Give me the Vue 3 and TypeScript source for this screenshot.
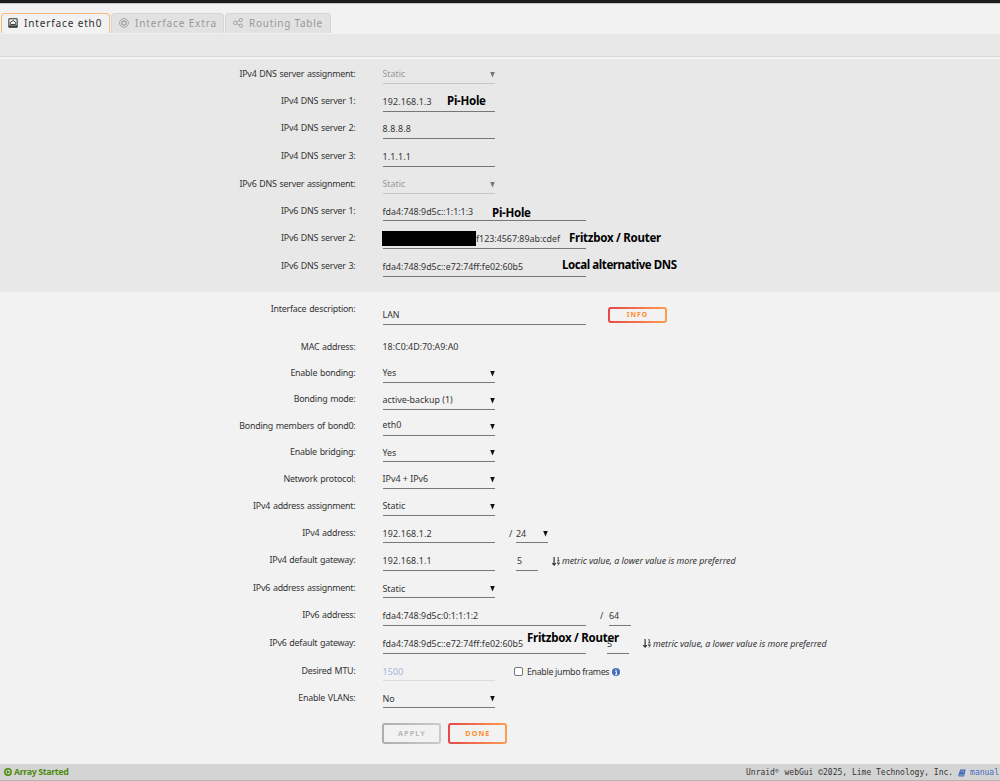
<script setup lang="ts">
interface Row {
  label: string
  value?: string
  kind: 'select' | 'input' | 'text'
  line: number
  labelY: number
  valueY: number
  width?: 'wide'
  disabled?: boolean
  redacted?: boolean
  extra?: 'info' | 'mask4' | 'metric4' | 'mask6' | 'metric6' | 'jumbo'
}

// line / labelY / valueY: baseline rule, label centre and value centre of each row.
const dnsRows: Row[] = [
  { label: 'IPv4 DNS server assignment:', value: 'Static', kind: 'select', line: 84, labelY: 73.5, valueY: 74, disabled: true },
  { label: 'IPv4 DNS server 1:', value: '192.168.1.3', kind: 'input', line: 112, labelY: 100.5, valueY: 101.5 },
  { label: 'IPv4 DNS server 2:', value: '8.8.8.8', kind: 'input', line: 139, labelY: 128, valueY: 129 },
  { label: 'IPv4 DNS server 3:', value: '1.1.1.1', kind: 'input', line: 167, labelY: 156, valueY: 157 },
  { label: 'IPv6 DNS server assignment:', value: 'Static', kind: 'select', line: 194, labelY: 183.5, valueY: 184, disabled: true },
  { label: 'IPv6 DNS server 1:', value: 'fda4:748:9d5c::1:1:1:3', kind: 'input', line: 221, labelY: 210.5, valueY: 211.5, width: 'wide' },
  { label: 'IPv6 DNS server 2:', value: 'f123:4567:89ab:cdef', kind: 'input', line: 249, labelY: 238, valueY: 238.5, width: 'wide', redacted: true },
  { label: 'IPv6 DNS server 3:', value: 'fda4:748:9d5c::e72:74ff:fe02:60b5', kind: 'input', line: 277, labelY: 265.5, valueY: 266.5, width: 'wide' },
]

const mainRows: Row[] = [
  { label: 'Interface description:', value: 'LAN', kind: 'input', line: 325, labelY: 309, valueY: 314.5, width: 'wide', extra: 'info' },
  { label: 'MAC address:', value: '18:C0:4D:70:A9:A0', kind: 'text', line: 356, labelY: 346.5, valueY: 346.5 },
  { label: 'Enable bonding:', value: 'Yes', kind: 'select', line: 383, labelY: 372.5, valueY: 373 },
  { label: 'Bonding mode:', value: 'active-backup (1)', kind: 'select', line: 410, labelY: 399, valueY: 400 },
  { label: 'Bonding members of bond0:', value: 'eth0', kind: 'select', line: 436, labelY: 426, valueY: 425 },
  { label: 'Enable bridging:', value: 'Yes', kind: 'select', line: 462, labelY: 452, valueY: 452.5 },
  { label: 'Network protocol:', value: 'IPv4 + IPv6', kind: 'select', line: 489, labelY: 478.5, valueY: 479 },
  { label: 'IPv4 address assignment:', value: 'Static', kind: 'select', line: 516, labelY: 505.5, valueY: 506 },
  { label: 'IPv4 address:', value: '192.168.1.2', kind: 'input', line: 543, labelY: 532.5, valueY: 533.5, extra: 'mask4' },
  { label: 'IPv4 default gateway:', value: '192.168.1.1', kind: 'input', line: 571, labelY: 560, valueY: 561, extra: 'metric4' },
  { label: 'IPv6 address assignment:', value: 'Static', kind: 'select', line: 598, labelY: 588, valueY: 588.5 },
  { label: 'IPv6 address:', value: 'fda4:748:9d5c:0:1:1:1:2', kind: 'input', line: 626, labelY: 615, valueY: 616, width: 'wide', extra: 'mask6' },
  { label: 'IPv6 default gateway:', value: 'fda4:748:9d5c::e72:74ff:fe02:60b5', kind: 'input', line: 654, labelY: 642.5, valueY: 643.5, width: 'wide', extra: 'metric6' },
  { label: 'Desired MTU:', value: '1500', kind: 'input', line: 681, labelY: 670.5, valueY: 671.5, disabled: true, extra: 'jumbo' },
  { label: 'Enable VLANs:', value: 'No', kind: 'select', line: 708, labelY: 698, valueY: 698.5 },
]

function withVars(rows: Row[], start: number) {
  return rows.map((row, i) => {
    const top = i === 0 ? start : rows[i - 1].line
    return {
      ...row,
      numeric: /^[\d.]+$/.test(row.value ?? ''),
      vars: {
        '--h': `${row.line - top}px`,
        '--label': `${row.line - row.labelY - 7}px`,
        '--value': `${row.line - row.valueY - 7}px`,
      },
    }
  })
}

const sections = [
  { name: 'dns', rows: withVars(dnsRows, 58) },
  { name: 'main', rows: withVars(mainRows, 292) },
]
</script>

<template>
  <div class="page">
    <div class="topbar"></div>
    <nav class="tabs">
      <div class="tab active">
        <svg viewBox="0 0 12 12"><path d="M1 .9h10v10.2H1z" fill="none" stroke="currentColor" stroke-width="1.2" /><path d="M2.7 7.8V5.4L6 2.9l3.3 2.5v2.4z" fill="none" stroke="currentColor" stroke-width="1.1" /><path d="M1 9.8h10" stroke="currentColor" stroke-width="1.8" /></svg>
        <span>Interface eth0</span>
      </div>
      <div class="tab extra">
        <svg viewBox="0 0 12 12" fill="none" stroke="currentColor"><circle cx="6" cy="6" r="5.3" /><circle cx="6" cy="6" r="2.5" stroke-width="1.4" /></svg>
        <span>Interface Extra</span>
      </div>
      <div class="tab routing">
        <svg viewBox="0 0 12 12" fill="none" stroke="currentColor"><circle cx="2.7" cy="5.8" r="2.2" /><circle cx="9.5" cy="2.4" r="1.9" /><circle cx="9.5" cy="9.2" r="1.9" /><path d="M4.6 4.8 7.8 3.2M4.6 6.8l3.2 1.6" /></svg>
        <span>Routing Table</span>
      </div>
    </nav>
    <div class="strip"></div>

    <section v-for="s in sections" :key="s.name" :class="s.name">
      <div v-for="row in s.rows" :key="row.label" class="row" :style="row.vars">
        <label class="label">{{ row.label }}</label>
        <div class="field" :class="[row.kind, row.width, { disabled: row.disabled }]">
          <span v-if="row.redacted" class="redaction"></span>
          <span class="value" :class="{ numeric: row.numeric }">{{ row.value }}</span>
          <svg v-if="row.kind === 'select'" class="arrow" viewBox="0 0 5 6"><path d="M0 0h5L2.5 6z" /></svg>
        </div>
        <button v-if="row.extra === 'info'" class="btn info">INFO</button>
        <template v-if="row.extra === 'mask4'">
          <span class="slash s4">/</span>
          <div class="field prefix"><span class="value">24</span><svg class="arrow" viewBox="0 0 5 6"><path d="M0 0h5L2.5 6z" /></svg></div>
        </template>
        <template v-if="row.extra === 'mask6'">
          <span class="slash s6">/</span>
          <div class="field small"><span class="value">64</span></div>
        </template>
        <template v-if="row.extra === 'metric4' || row.extra === 'metric6'">
          <div class="field small" :class="row.extra"><span class="value">5</span></div>
          <span class="metric">
            <svg viewBox="0 0 8 9" fill="none" stroke="currentColor"><path d="M2.1 0v8M.3 6.2l1.8 2 1.8-2" stroke-width="1.2" /><path d="M5.3.9 6.3.4v3.2M5.2 3.7h2.3" stroke-width=".8" /><circle cx="6.3" cy="5.9" r=".9" stroke-width=".8" /><path d="M7.2 5.8q0 2-1.5 2.5" stroke-width=".8" /></svg>
            <em>metric value, a lower value is more preferred</em>
          </span>
        </template>
        <span v-if="row.extra === 'jumbo'" class="jumbo">
          <i class="box"></i><span>Enable jumbo frames</span>
          <svg viewBox="0 0 8 8"><circle cx="4" cy="4" r="4" fill="#486dba" /><path d="M3.2 3.4h1.2v2.8M3 6.3h2.2M3.4 1.9h1.2" stroke="#fff" stroke-width="1" fill="none" /></svg>
        </span>
      </div>
    </section>

    <div class="actions">
      <button class="btn apply">APPLY</button>
      <button class="btn done">DONE</button>
    </div>

    <footer class="footer">
      <div class="status">
        <svg viewBox="0 0 8 8"><circle cx="4" cy="4" r="3.2" fill="none" stroke="#4f8a10" stroke-width="1.5" /><path d="M2.8 2 6 4 2.8 6z" fill="#4f8a10" /></svg>
        <b>Array Started</b>
      </div>
      <div class="copyright">
        <span>Unraid<span class="reg">®</span> webGui ©2025, Lime Technology, Inc.</span>
        <svg viewBox="0 0 8 8"><path d="M2.2.5h5.5L6.1 7.4H.9Q-.2 6.8.4 5.7z" fill="#486dba" /><path d="M3.2 2.4h2.8M1.2 6h4.6" stroke="#d4d4d4" stroke-width=".6" /></svg>
        <a>manual</a>
      </div>
    </footer>

    <strong class="note n1">Pi-Hole</strong>
    <strong class="note n2">Pi-Hole</strong>
    <strong class="note n3">Fritzbox / Router</strong>
    <strong class="note n4">Local alternative DNS</strong>
    <strong class="note n5">Fritzbox / Router</strong>
  </div>
</template>

<style>
body { margin: 0; background: #f2f2f2; }
</style>

<style scoped>
.page {
  position: relative;
  display: flex;
  flex-direction: column;
  width: 1000px;
  height: 781px;
  overflow: hidden;
  background: #f2f2f2;
  color: #343434;
  font: 8.9px/14px "Noto Sans", sans-serif;
  white-space: nowrap;
}
.page > * { flex-shrink: 0; }
svg { display: block; overflow: visible; flex-shrink: 0; }
.topbar { height: 3px; background: #1c1b1b; border-bottom: 1px solid #c6c6c6; }
.tabs { display: flex; align-items: flex-end; height: 29px; padding-left: 1px; gap: 1px; }
.tab {
  display: flex;
  align-items: center;
  box-sizing: border-box;
  height: 20px;
  padding-left: 7px;
  border: 1px solid #d5d5d5;
  border-bottom: 0;
  border-radius: 4px 4px 0 0;
  background: #e2e2e2;
  color: #999;
  font-size: 10px;
  letter-spacing: 0.86px;
}
.tab span { margin-top: -1px; }
.tab svg { width: 10px; height: 10px; margin: -2px 6px 0 0; }
.tab.active { width: 109px; background: #f2f2f2; border-color: #fbb87c; color: #303030; padding-left: 6px; }
.tab.extra { width: 113px; }
.tab.routing { width: 106px; letter-spacing: 0.74px; }
.strip { height: 22px; margin-top: 1px; background: #e8e8e8; border-bottom: 1px solid #d8d8d8; }
.dns { height: 234px; margin-top: 1px; background: #e8e8e8; display: flow-root; border-top: 1px solid #f2f2f2; box-sizing: border-box; }
.dns .row:first-child { margin-top: -1px; }
.main { height: 416px; }
.row { display: flex; align-items: flex-end; height: var(--h); }
.label {
  width: 355.5px;
  margin-right: 27px;
  margin-bottom: var(--label);
  text-align: right;
  letter-spacing: -0.23px;
  word-spacing: 0.7px;
}
.field {
  display: flex;
  align-items: flex-end;
  justify-content: space-between;
  box-sizing: border-box;
  width: 112.5px;
  height: 21px;
  border-bottom: 1px solid #777;
}
.field.wide { width: 203.5px; justify-content: flex-start; }
.field.text { border-color: transparent; }
.field.disabled { border-color: #c6c6c6; color: #9a9a9a; }
.field.input.disabled { color: #a5b5dc; border-color: #dcdcdc; }
.value { margin-bottom: calc(var(--value) - 1px); }
.numeric { letter-spacing: 0.14px; }
.arrow { width: 5px; height: 5.5px; margin: 0; margin-bottom: 6px; fill: #111; }
.disabled .arrow { fill: #777; }
.redaction { width: 94px; height: 15px; margin: 0 0 2px -0.5px; background: #000; }
.field.prefix { width: 32px; }
.field.small { width: 22px; }
.slash { margin-bottom: var(--value); }
.s4 { width: 7px; margin-left: 14px; }
.s6 { width: 9px; margin-left: 14px; }
.metric4 { margin-left: 21px; padding-left: 1px; }
.metric6 { margin-left: 21px; }
.metric { display: flex; align-items: center; margin: 0 0 var(--value) 14px; letter-spacing: -0.04px; }
.metric svg { width: 8px; height: 9px; margin-right: 2px; }
.jumbo { display: flex; align-items: center; margin: 0 0 var(--value) 18.5px; font-size: 8.8px; letter-spacing: -0.3px; }
.box { box-sizing: border-box; width: 9px; height: 9px; margin-right: 4.5px; border: 1px solid #777; border-radius: 2px; background: #fff; }
.jumbo svg { width: 8px; height: 8px; margin-left: 3px; }
.btn {
  box-sizing: border-box;
  height: 21px;
  width: 59px;
  padding: 0;
  border: 2px solid transparent;
  border-radius: 3px;
  background: linear-gradient(#f2f2f2, #f2f2f2) padding-box, linear-gradient(90deg, #e5484b, #ff9c50) border-box;
  color: #ff8c2f;
  font: bold 7.2px/1 "Noto Sans", sans-serif;
  letter-spacing: 1.1px;
}
.info { height: 16px; margin: 0 0 2px 22px; font-size: 6.8px; }
.apply {
  background: linear-gradient(#f2f2f2, #f2f2f2) padding-box, linear-gradient(90deg, #adadad, #cacaca) border-box;
  color: #b8b8b8;
}
.actions { display: flex; gap: 7px; padding: 15px 0 0 382.4px; }
.footer {
  display: flex;
  align-items: center;
  justify-content: space-between;
  box-sizing: border-box;
  height: 17px;
  margin-top: auto;
  padding: 0 1px 0 4px;
  background: #d4d4d4;
  border-bottom: 1px solid #b4b4b4;
}
.status { display: flex; align-items: center; gap: 2px; color: #4f8a10; letter-spacing: -0.38px; }
.status svg { width: 8px; height: 8px; }
.copyright { display: flex; align-items: center; font: 8px/14px "DejaVu Sans Mono", monospace; padding-top: 2px; }
.copyright svg { width: 8px; height: 8px; margin: 0 4px 0 5px; }
.copyright a { color: #486dba; }
.reg { display: inline-block; width: 4.8px; font-size: 6px; line-height: 6px; vertical-align: 2px; }
.note { position: absolute; color: #000; font-size: 11.5px; line-height: 16px; letter-spacing: -0.26px; }
.n1 { left: 447px; top: 93px; }
.n2 { left: 492px; top: 205px; }
.n3 { left: 569px; top: 230px; }
.n4 { left: 562px; top: 257px; letter-spacing: -0.42px; }
.n5 { left: 527px; top: 630px; }
</style>
